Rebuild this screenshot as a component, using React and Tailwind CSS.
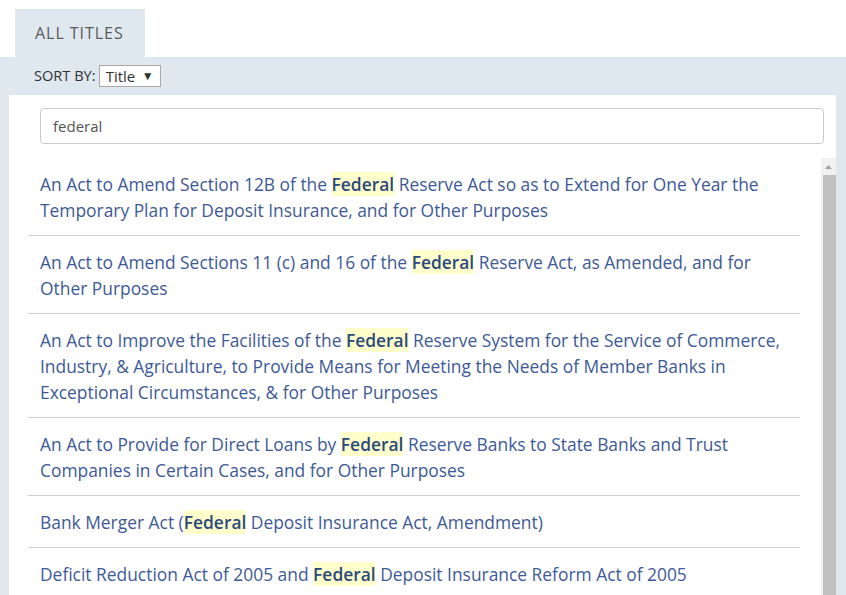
import React from 'react';

const TITLES = [
  ['An Act to Amend Section 12B of the ', 'Federal', ' Reserve Act so as to Extend for One Year the Temporary Plan for Deposit Insurance, and for Other Purposes'],
  ['An Act to Amend Sections 11 (c) and 16 of the ', 'Federal', ' Reserve Act, as Amended, and for Other Purposes'],
  ['An Act to Improve the Facilities of the ', 'Federal', ' Reserve System for the Service of Commerce, Industry, & Agriculture, to Provide Means for Meeting the Needs of Member Banks in Exceptional Circumstances, & for Other Purposes'],
  ['An Act to Provide for Direct Loans by ', 'Federal', ' Reserve Banks to State Banks and Trust Companies in Certain Cases, and for Other Purposes'],
  ['Bank Merger Act (', 'Federal', ' Deposit Insurance Act, Amendment)'],
  ['Deficit Reduction Act of 2005 and ', 'Federal', ' Deposit Insurance Reform Act of 2005'],
  ['', 'Federal', ' Deposit Insurance Act'],
];

const TitleRow = ({ parts, first }) => {
  const [a, hit, b] = parts;
  return (
    <li className={`px-3 py-[12.5px] text-[17.4px] leading-[26px] text-[#3d5a96] ${first ? '' : 'border-t border-[#d0d0d0]'}`}>
      {a}
      <mark className="bg-[#ffffcc] font-semibold text-[#2b4a7c]">{hit}</mark>
      {b}
    </li>
  );
};

export default function App() {
  return (
    <div className="h-[595px] w-[846px] overflow-hidden bg-white font-['Open_Sans',sans-serif]">
      {/* Tab */}
      <div className="pl-[15px] pt-[9px]">
        <div className="flex h-[48px] w-[130px] items-center bg-[#dfe7ef] pl-5 text-[16px] tracking-[0.06em] text-[#5a5a5a]">
          ALL TITLES
        </div>
      </div>

      <div className="bg-[#dfe7ef] pl-[9px] pr-[10px]">
        {/* Sort bar */}
        <div className="flex h-[38px] items-center pl-[25px] text-[14.6px] text-[#333]">
          <span>SORT BY:</span>
          <div className="ml-[3px] flex h-[22px] w-[62px] items-center justify-between border border-[#a9a9a9] bg-white pl-[6px] pr-[6px] text-[15px] text-[#333]">
            <span>Title</span>
            <span className="text-[12px]">▼</span>
          </div>
        </div>

        {/* Results */}
        <div className="flex h-[500px] flex-col bg-white">
          <div className="pl-[31px] pr-[12px] pt-[13px]">
            <div className="flex h-[36px] items-center rounded border border-[#ccc] px-3 text-[15px] text-[#555]">
              federal
            </div>
          </div>
          <div className="mt-[14px] flex min-h-0 flex-1">
            <ul className="ml-[19px] mr-[21px] min-w-0 flex-1 overflow-hidden">
              {TITLES.map((t, i) => (
                <TitleRow key={i} parts={t} first={i === 0} />
              ))}
            </ul>
            {/* Scrollbar */}
            <div className="flex w-[15px] flex-col bg-[#f1f1f1]">
              <div className="flex h-[17px] items-center justify-center">
                <svg width="7" height="4" viewBox="0 0 7 4">
                  <path d="M3.5 0L7 4H0z" fill="#a3a3a3" />
                </svg>
              </div>
              <div className="ml-[2px] flex-1 bg-[#c1c1c1]" />
            </div>
          </div>
        </div>
      </div>
    </div>
  );
}
